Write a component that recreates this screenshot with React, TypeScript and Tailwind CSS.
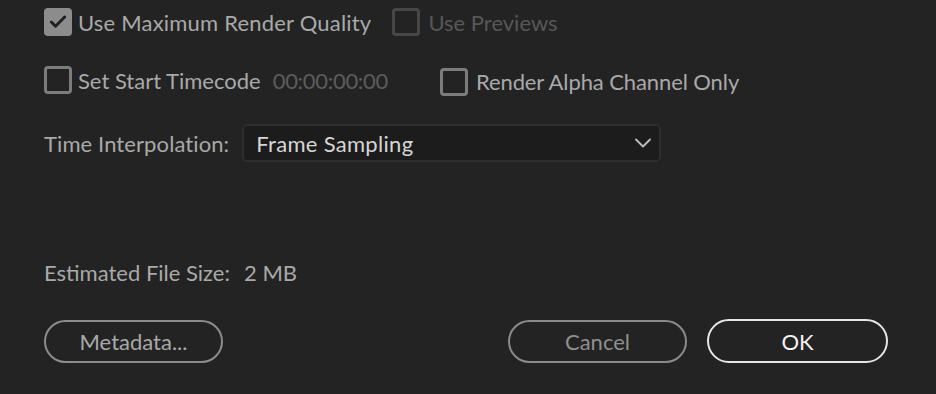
import React from 'react';
import { Check, ChevronDown } from 'lucide-react';

interface BoxProps {
  checked?: boolean;
  disabled?: boolean;
}

const Box: React.FC<BoxProps> = ({ checked = false, disabled = false }) => {
  if (checked) {
    return (
      <div className="w-[28px] h-[28px] shrink-0 rounded-[4px] bg-[#8c8c8c] flex items-center justify-center">
        <Check size={20} strokeWidth={3.5} className="text-[#202020]" />
      </div>
    );
  }
  return (
    <div
      className={`w-[28px] h-[28px] shrink-0 rounded-[4px] border-[3px] ${
        disabled ? 'border-[#474747]' : 'border-[#7c7c7c]'
      }`}
    />
  );
};

const App: React.FC = () => {
  return (
    <div className="w-[936px] h-[394px] bg-[#232323] px-[44px] flex flex-col font-['Lato',sans-serif] text-[22px] text-[#a9a9a9] overflow-hidden">
      {/* Render options */}
      <div className="mt-[8px] h-[28px] flex items-center">
        <Box checked />
        <span className="ml-[6px] tracking-[0.2px]">Use Maximum Render Quality</span>
        <div className="ml-[21px]">
          <Box disabled />
        </div>
        <span className="ml-[8px] text-[#575757]">Use Previews</span>
      </div>

      <div className="mt-[30px] h-[28px] flex items-center">
        <Box />
        <span className="ml-[6px]">Set Start Timecode</span>
        <span className="ml-[12px] text-[#5c5c5c] tracking-[-0.3px]">00:00:00:00</span>
        <div className="ml-[52px] mt-[3px]">
          <Box />
        </div>
        <span className="ml-[8px] mt-[3px] tracking-[-0.1px]">Render Alpha Channel Only</span>
      </div>

      {/* Interpolation */}
      <div className="mt-[30px] flex items-center">
        <span className="tracking-[0.1px]">Time Interpolation:</span>
        <div className="ml-[13px] w-[419px] h-[38px] rounded-[5px] border-2 border-[#2e2e2e] bg-[#1c1c1c] flex items-center justify-between pl-[12px] pr-[2px]">
          <span className="text-[#d6d6d6] tracking-[0.3px]">Frame Sampling</span>
          <ChevronDown size={28} strokeWidth={1.6} className="text-[#bdbdbd]" />
        </div>
      </div>

      {/* File size */}
      <div className="mt-[96px] h-[28px] flex items-center">
        <span>Estimated File Size:</span>
        <span className="ml-[14px]">2 MB</span>
      </div>

      {/* Buttons */}
      <div className="mt-[33px] flex items-center">
        <button className="w-[179px] h-[43px] rounded-full border-2 border-[#8c8c8c] text-[#a9a9a9]">
          Metadata...
        </button>
        <div className="flex-1" />
        <button className="w-[179px] h-[43px] rounded-full border-2 border-[#8a8a8a] text-[#8f8f8f]">
          Cancel
        </button>
        <button className="ml-[20px] mr-[4px] w-[181px] h-[44px] rounded-full border-2 border-[#e6e6e6] text-[#f2f2f2]">
          OK
        </button>
      </div>
    </div>
  );
};

export default App;
